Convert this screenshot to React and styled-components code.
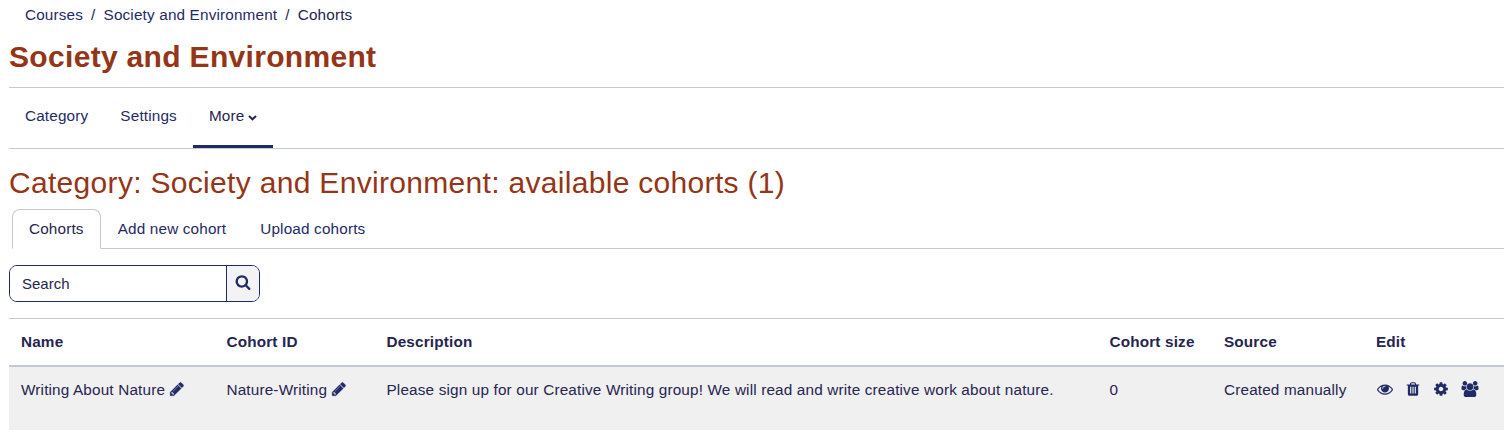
import React from "react";
import styled, { createGlobalStyle } from "styled-components";

const navy = "#1f2a66";
const ink = "#262550";
const rust = "#943517";
const line = "#c1cad6";

const GlobalStyle = createGlobalStyle`
  *, *::before, *::after { box-sizing: border-box; }
  body {
    margin: 0;
    background: #fff;
    color: ${ink};
    font-family: "Liberation Sans", Arial, sans-serif;
    font-size: 15.3px;
    line-height: 22px;
    letter-spacing: 0.16px;
    overflow: hidden;
  }
`;

const Page = styled.main`
  width: 1504px;
  padding: 4px 0 0 9px;
`;

const Breadcrumb = styled.nav`
  display: flex;
  gap: 8px;
  padding-left: 16px;
  white-space: pre;
`;

const Link = styled.a`
  color: ${navy};
  text-decoration: none;
`;

const Title = styled.h1`
  margin: 12px 0 0;
  font-size: 30px;
  line-height: 38px;
  font-weight: 700;
  letter-spacing: 0.32px;
  color: ${rust};
`;

const MoreNav = styled.nav`
  display: flex;
  height: 62px;
  margin-top: 11px;
  border-top: 1px solid ${line};
  border-bottom: 1px solid ${line};
`;

const MoreNavItem = styled.a`
  display: flex;
  align-items: center;
  gap: 4px;
  padding: 0 16px 4px;
  border-top: 3px solid transparent;
  border-bottom: 3px solid ${(p) => (p.$active ? navy : "transparent")};
  color: ${(p) => (p.$active ? ink : navy)};
`;

const SubTitle = styled.h2`
  margin: 14px 0 7px;
  font-size: 30px;
  line-height: 39px;
  font-weight: 400;
  letter-spacing: 0.31px;
  color: ${rust};
`;

const Tabs = styled.div`
  display: flex;
  height: 40px;
  margin-left: 3px;
  border-bottom: 1px solid ${line};
`;

const Tab = styled.a`
  height: 40px;
  padding: 8px 16px;
  border: 1px solid ${(p) => (p.$active ? line : "transparent")};
  border-bottom-color: ${(p) => (p.$active ? "#fff" : "transparent")};
  border-radius: 8px 8px 0 0;
  color: ${(p) => (p.$active ? ink : navy)};
`;

const SearchGroup = styled.form`
  display: flex;
  width: 251px;
  height: 37px;
  margin: 16px 0;
  border: 1px solid ${navy};
  border-radius: 8px;
  overflow: hidden;
`;

const SearchInput = styled.input`
  flex: 1;
  min-width: 0;
  padding: 1px 12px 0;
  border: 0;
  outline: 0;
  background: #fff;
  font: inherit;
  font-size: 15px;
  color: ${ink};
  &::placeholder { color: ${ink}; opacity: 1; }
`;

const SearchButton = styled.button`
  display: flex;
  align-items: center;
  justify-content: center;
  width: 33px;
  padding: 0 0 3px;
  border: 0;
  border-left: 1px solid ${navy};
  background: #f3f3f5;
`;

const Table = styled.table`
  width: 100%;
  table-layout: fixed;
  border-collapse: separate;
  border-spacing: 0;
`;

const Column = styled.col`
  width: ${(p) => p.$width};
`;

const HeadCell = styled.th`
  height: 49px;
  padding: 0 12px 1px;
  border-top: 1px solid ${line};
  border-bottom: 2px solid ${line};
  text-align: left;
  white-space: nowrap;
`;

const Cell = styled.td`
  height: 63px;
  padding: 12px 12px 0;
  background: #f0f0f0;
  vertical-align: top;
  white-space: nowrap;
`;

const Editable = styled.span`
  display: flex;
  align-items: center;
  gap: 4px;
`;

const Actions = styled.div`
  display: flex;
  align-items: center;
  gap: 12.3px;
  height: 20px;
  padding-left: 0.5px;
`;

const Icon = styled.svg`
  display: block;
  flex: none;
  width: ${(p) => p.$w || 16}px;
  height: ${(p) => p.$h || 16}px;
  fill: ${navy};
`;

const PencilIcon = styled(Icon)`
  margin-bottom: 2px;
  stroke: ${navy};
  stroke-width: 25;
`;

const ChevronIcon = styled(Icon)`
  margin-top: 3px;
  fill: none;
  stroke: ${ink};
  stroke-width: 2;
`;

const paths = {
  search: "M1216 832q0-185-131.5-316.5t-316.5-131.5-316.5 131.5-131.5 316.5 131.5 316.5 316.5 131.5 316.5-131.5 131.5-316.5zm512 832q0 52-38 90t-90 38q-54 0-90-38l-343-342q-179 124-399 124-143 0-273.5-55.5t-225-150-150-225-55.5-273.5 55.5-273.5 150-225 225-150 273.5-55.5 273.5 55.5 225 150 150 225 55.5 273.5q0 220-124 399l343 343q37 37 37 90z",
  pencil: "M491 1536l91-91-235-235-91 91v107h128v128h107zm523-928q0-22-22-22-10 0-17 7l-542 542q-7 7-7 17 0 22 22 22 10 0 17-7l542-542q7-7 7-17zm-54-192l416 416-832 832h-416v-416zm683 96q0 53-37 90l-166 166-416-416 166-165q36-38 90-38 53 0 91 38l235 234q37 39 37 91z",
  trash: "M704 1376v-704q0-14-9-23t-23-9h-64q-14 0-23 9t-9 23v704q0 14 9 23t23 9h64q14 0 23-9t9-23zm256 0v-704q0-14-9-23t-23-9h-64q-14 0-23 9t-9 23v704q0 14 9 23t23 9h64q14 0 23-9t9-23zm256 0v-704q0-14-9-23t-23-9h-64q-14 0-23 9t-9 23v704q0 14 9 23t23 9h64q14 0 23-9t9-23zm-544-992h448l-48-117q-7-9-17-11h-317q-10 2-17 11zm928 32v64q0 14-9 23t-23 9h-96v948q0 83-47 143.5t-113 60.5h-832q-66 0-113-58.5t-47-141.5v-952h-96q-14 0-23-9t-9-23v-64q0-14 9-23t23-9h309l70-167q15-37 54-63t79-26h320q40 0 79 26t54 63l70 167h309q14 0 23 9t9 23z",
  eye: "M1664 960q-152-236-381-353 61 104 61 225 0 185-131.5 316.5t-316.5 131.5-316.5-131.5-131.5-316.5q0-121 61-225-229 117-381 353 133 205 333.5 326.5t434.5 121.5 434.5-121.5 333.5-326.5zm-720-384q0-20-14-34t-34-14q-125 0-214.5 89.5t-89.5 214.5q0 20 14 34t34 14 34-14 14-34q0-86 61-147t147-61q20 0 34-14t14-34zm848 384q0 34-20 69-140 230-376.5 368.5t-499.5 138.5-499.5-139-376.5-368q-20-35-20-69t20-69q140-229 376.5-368t499.5-139 499.5 139 376.5 368q20 35 20 69z",
  cog: "M1152 896q0-106-75-181t-181-75-181 75-75 181 75 181 181 75 181-75 75-181zm512-109v222q0 12-8 23t-20 13l-185 28q-19 54-39 91 35 50 107 138 10 12 10 25t-9 23q-27 37-99 108t-94 71q-12 0-26-9l-138-108q-44 23-91 38-16 136-29 186-7 28-36 28h-222q-14 0-24.5-8.5t-11.5-21.5l-28-184q-49-16-90-37l-141 107q-10 9-25 9-14 0-25-11-126-114-165-168-7-10-7-23 0-12 8-23 15-21 51-66.5t54-70.5q-27-50-41-99l-183-27q-13-2-21-12.5t-8-23.5v-222q0-12 8-23t19-13l186-28q14-46 39-92-40-57-107-138-10-12-10-24 0-10 9-23 26-36 98.5-107.5t94.5-71.5q13 0 26 10l138 107q44-23 91-38 16-136 29-186 7-28 36-28h222q14 0 24.5 8.5t11.5 21.5l28 184q49 16 90 37l142-107q9-9 24-9 13 0 25 10 129 119 165 170 7 8 7 22 0 12-8 23-15 21-51 66.5t-54 70.5q26 50 41 98l183 28q13 2 21 12.5t8 23.5z",
  users: "M593 896q-162 5-265 128h-134q-82 0-138-40.5t-56-118.5q0-353 124-353 6 0 43.5 21t97.5 42.5 119 21.5q67 0 133-23-5 37-5 66 0 139 81 256zm1071 637q0 120-73 189.5t-194 69.5h-874q-121 0-194-69.5t-73-189.5q0-53 3.5-103.5t14-109 26.5-108.5 43-97.5 62-81 85.5-53.5 111.5-20q10 0 43 21.5t73 48 107 48 135 21.5 135-21.5 107-48 73-48 43-21.5q61 0 111.5 20t85.5 53.5 62 81 43 97.5 26.5 108.5 14 109 3.5 103.5zm-1024-1277q0 106-75 181t-181 75-181-75-75-181 75-181 181-75 181 75 75 181zm704 384q0 159-112.5 271.5t-271.5 112.5-271.5-112.5-112.5-271.5 112.5-271.5 271.5-112.5 271.5 112.5 112.5 271.5zm576 225q0 78-56 118.5t-138 40.5h-134q-103-123-265-128 81-117 81-256 0-29-5-66 66 23 133 23 59 0 119-21.5t97.5-42.5 43.5-21q124 0 124 353zm-128-609q0 106-75 181t-181 75-181-75-75-181 75-181 181-75 181 75 75 181z",
};

function Glyph({ name, w, h, box = "0 0 1792 1792" }) {
  return (
    <Icon $w={w} $h={h} viewBox={box} aria-hidden="true">
      <path d={paths[name]} />
    </Icon>
  );
}

function Pencil() {
  return (
    <PencilIcon viewBox="0 0 1792 1792" aria-hidden="true">
      <path d={paths.pencil} />
    </PencilIcon>
  );
}

function Chevron() {
  return (
    <ChevronIcon $w={9} $h={6} viewBox="0 0 9 6" aria-hidden="true">
      <path d="M1 1 L4.5 4.3 L8 1" />
    </ChevronIcon>
  );
}

const columns = [
  ["Name", "205.5px"],
  ["Cohort ID", "160px"],
  ["Description", "723px"],
  ["Cohort size", "114.5px"],
  ["Source", "152px"],
  ["Edit", "auto"],
];

export default function App() {
  return (
    <>
      <GlobalStyle />
      <Page>
        <Breadcrumb>
          <Link>Courses</Link>
          <span>/</span>
          <Link>Society and Environment</Link>
          <span>/</span>
          <span>Cohorts</span>
        </Breadcrumb>
        <Title>Society and Environment</Title>
        <MoreNav>
          <MoreNavItem>Category</MoreNavItem>
          <MoreNavItem>Settings</MoreNavItem>
          <MoreNavItem $active>
            More
            <Chevron />
          </MoreNavItem>
        </MoreNav>
        <SubTitle>Category: Society and Environment: available cohorts (1)</SubTitle>
        <Tabs>
          <Tab $active>Cohorts</Tab>
          <Tab>Add new cohort</Tab>
          <Tab>Upload cohorts</Tab>
        </Tabs>
        <SearchGroup>
          <SearchInput placeholder="Search" />
          <SearchButton type="button" aria-label="Search">
            <Glyph name="search" />
          </SearchButton>
        </SearchGroup>
        <Table>
          <colgroup>
            {columns.map(([name, width]) => (
              <Column key={name} $width={width} />
            ))}
          </colgroup>
          <thead>
            <tr>
              {columns.map(([name]) => (
                <HeadCell key={name}>{name}</HeadCell>
              ))}
            </tr>
          </thead>
          <tbody>
            <tr>
              <Cell>
                <Editable>
                  Writing About Nature
                  <Pencil />
                </Editable>
              </Cell>
              <Cell>
                <Editable>
                  Nature-Writing
                  <Pencil />
                </Editable>
              </Cell>
              <Cell>
                Please sign up for our Creative Writing group! We will read and write creative work about nature.
              </Cell>
              <Cell>0</Cell>
              <Cell>Created manually</Cell>
              <Cell>
                <Actions>
                  <Glyph name="eye" />
                  <Glyph name="trash" />
                  <Glyph name="cog" />
                  <Glyph name="users" w={18} box="0 0 1920 1792" />
                </Actions>
              </Cell>
            </tr>
          </tbody>
        </Table>
      </Page>
    </>
  );
}
